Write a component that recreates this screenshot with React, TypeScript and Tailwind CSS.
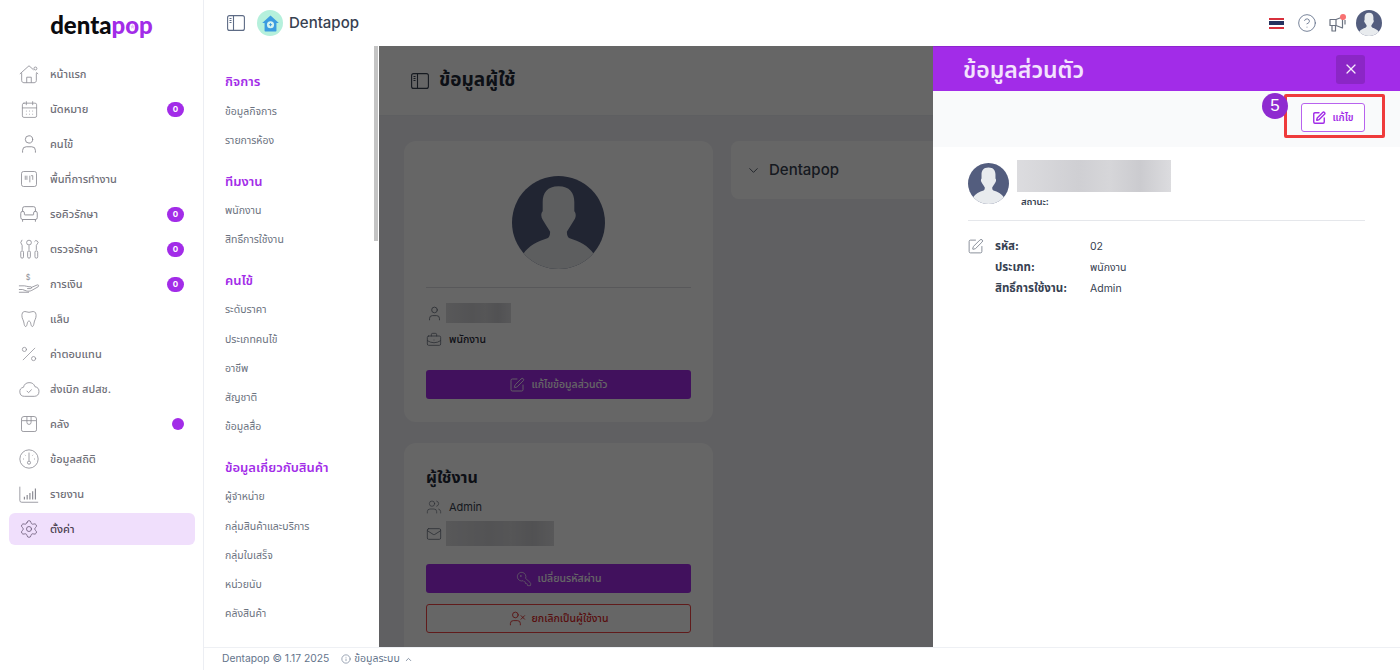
import type { ReactNode } from "react"
import {
  ArmchairIcon,
  BriefcaseBusiness,
  CalendarDays,
  ChevronDown,
  ChevronUp,
  CircleHelp,
  Info,
  KeyRound,
  Mail,
  Percent,
  Settings,
  SquarePen,
  User,
  UserX,
  Users,
  X,
} from "lucide-react"

const thai = "font-['Inter','Noto_Sans','Noto_Sans_Thai',sans-serif]"

function Avatar({ className }: { className: string }) {
  return (
    <svg viewBox="0 0 100 100" className={className}>
      <defs>
        <clipPath id="av-clip">
          <circle cx="50" cy="50" r="50" />
        </clipPath>
      </defs>
      <g clipPath="url(#av-clip)">
        <rect width="100" height="100" fill="#535d7e" />
        <path
          d="M50 11C38 11 33 18 33 28L33 38C31 40 31 44 33 47C35 50 36 52 38 55L41 60C41 64 40 66 38 67C28 70 18 75 12 84L12 100L88 100L88 84C82 75 72 70 62 67C60 66 59 64 59 60L62 55C64 52 65 50 67 47C69 44 69 40 67 38L67 28C67 18 62 11 50 11Z"
          fill="#e8ebee"
        />
      </g>
    </svg>
  )
}

// sidebar toggle with the small ticks in the left pane
function PaneIcon({ color }: { color: string }) {
  return (
    <svg viewBox="0 0 18 16" className="w-[18px] h-[16px]" fill="none" stroke={color} strokeWidth="1.100">
      <rect x="0.600" y="0.600" width="16.800" height="14.800" rx="2" />
      <path d="M6.500 .6v14.800" />
      <path d="M2.500 3.500h2M2.500 5.500h2M2.500 7.500h2" />
    </svg>
  )
}

function Tooth() {
  return (
    <svg viewBox="0 0 24 24" className="w-[20px] h-[20px]" fill="none" stroke="#8b8b93" strokeWidth="1">
      <path d="M7 3C4 3 3.500 6 3.500 8c0 4 2 5 2.500 9 .3 2 .8 4 2 4s1.500-2 2-4c.3-1.500.8-2.500 2-2.500s1.700 1 2 2.500c.5 2 .8 4 2 4s1.700-2 2-4c.5-4 2.500-5 2.500-9 0-2-.5-5-3.500-5-2 0-3 1-5 1S9 3 7 3z" />
    </svg>
  )
}

function HomeIcon() {
  return (
    <svg viewBox="0 0 24 24" className="w-[22px] h-[22px]" fill="none" stroke="#8b8b93" strokeWidth="0.900">
      <path d="M2 12 12 3l5 4.500M22 12l-2-1.800M4 11v8c0 1.500 1 2.500 2.500 2.500h11c1.500 0 2.500-1 2.500-2.500v-8M9.500 21.500v-6h5v6" />
      <circle cx="19" cy="6" r="1.600" />
    </svg>
  )
}

function Board() {
  return (
    <svg viewBox="0 0 24 24" className="w-[20px] h-[20px]" fill="none" stroke="#8b8b93" strokeWidth="1">
      <rect x="3" y="3" width="18" height="18" rx="2.500" />
      <path d="M7.500 8v5M9.500 8v5M13 8v8M16.500 8v5M14.500 8h2" />
    </svg>
  )
}

function Tools() {
  return (
    <svg viewBox="0 0 24 24" className="w-[22px] h-[22px]" fill="none" stroke="#8b8b93" strokeWidth="0.900">
      <path d="M4.500 2 3 5l1.500 3v5M12 8v5M20 8v5M18 4a2 2 0 1 1 3 2.500L20 8" />
      <circle cx="12" cy="5" r="2.600" />
      <rect x="3" y="14" width="3" height="8" rx="1.500" />
      <rect x="10.500" y="14" width="3" height="8" rx="1.500" />
      <rect x="18.500" y="14" width="3" height="8" rx="1.500" />
    </svg>
  )
}

function Hand() {
  return (
    <svg viewBox="0 0 24 24" className="w-[22px] h-[22px]" fill="none" stroke="#8b8b93" strokeWidth="0.900">
      <path d="M1 14h6c2 0 3 1 5 1h2c1 0 1 2 0 2h-4M14 16l7-3c1.500-.5 2 1 1 2l-7 4c-2 1-4 1-6 .5L5 18H1M1 21h11" />
      <text x="11" y="8" fontSize="8" fill="#8b8b93" stroke="none" textAnchor="middle" fontFamily="Inter">$</text>
    </svg>
  )
}

function CloudOk() {
  return (
    <svg viewBox="0 0 24 24" className="w-[22px] h-[22px]" fill="none" stroke="#8b8b93" strokeWidth="0.900">
      <path d="M7 20a5 5 0 0 1-1-9.900A6.500 6.500 0 0 1 18.500 9.500 5.300 5.300 0 0 1 18 20z" />
      <path d="m9.500 14 2 2 3.500-3.500" />
    </svg>
  )
}

function Box() {
  return (
    <svg viewBox="0 0 24 24" className="w-[20px] h-[20px]" fill="none" stroke="#8b8b93" strokeWidth="1">
      <path d="M3 8V6a3 3 0 0 1 3-3h12a3 3 0 0 1 3 3v2M3 8v11a2 2 0 0 0 2 2h14a2 2 0 0 0 2-2V8M3 8h18" />
      <path d="M9.500 3v7a2.500 2.500 0 0 0 5 0V3" />
    </svg>
  )
}

function Dial() {
  return (
    <svg viewBox="0 0 24 24" className="w-[22px] h-[22px]" fill="none" stroke="#8b8b93" strokeWidth="0.900">
      <circle cx="12" cy="12" r="10" />
      <path d="M12 5v9M5.500 12h1M17.500 12h1M7.500 7.500l.7.7M16.500 7.500l-.7.7" />
      <circle cx="12" cy="16" r="1.700" />
    </svg>
  )
}

function Bars() {
  return (
    <svg viewBox="0 0 24 24" className="w-[22px] h-[22px]" fill="none" stroke="#8b8b93" strokeWidth="0.900">
      <path d="M2 4v15a2 2 0 0 0 2 2h18" />
      <path d="M7 18v-3M10 18v-5M13 18v-7M16 18v-9M19 18V6" strokeWidth="1.300" />
    </svg>
  )
}

function Horn() {
  return (
    <svg viewBox="0 0 18 16" className="w-[18px] h-[16px]" fill="none" stroke="#6b7280" strokeWidth="1.200" strokeLinejoin="round">
      <path d="M1 3.500h6L13.500 1v11L7 9.500H1z" />
      <path d="M3 9.500V15h3.500V9.500M7 3.500v6M16 4v4.500" />
    </svg>
  )
}

type MenuItem = { label: string; icon: ReactNode; badge?: string; dot?: boolean; active?: boolean }

const grayLine = "#8b8b93"

const menu: MenuItem[] = [
  { label: "หน้าแรก", icon: <HomeIcon /> },
  { label: "นัดหมาย", icon: <CalendarDays size={19} strokeWidth={1} color={grayLine} />, badge: "0" },
  { label: "คนไข้", icon: <User size={22} strokeWidth={1} color={grayLine} /> },
  { label: "พื้นที่การทำงาน", icon: <Board /> },
  { label: "รอคิวรักษา", icon: <ArmchairIcon size={22} strokeWidth={1} color={grayLine} />, badge: "0" },
  { label: "ตรวจรักษา", icon: <Tools />, badge: "0" },
  { label: "การเงิน", icon: <Hand />, badge: "0" },
  { label: "แล็บ", icon: <Tooth /> },
  { label: "ค่าตอบแทน", icon: <Percent size={20} strokeWidth={0.9} color={grayLine} /> },
  { label: "ส่งเบิก สปสช.", icon: <CloudOk /> },
  { label: "คลัง", icon: <Box />, dot: true },
  { label: "ข้อมูลสถิติ", icon: <Dial /> },
  { label: "รายงาน", icon: <Bars /> },
  { label: "ตั้งค่า", icon: <Settings size={20} strokeWidth={1} color="#6b5b78" />, active: true },
]

const subnav = [
  { title: "กิจการ", items: ["ข้อมูลกิจการ", "รายการห้อง"] },
  { title: "ทีมงาน", items: ["พนักงาน", "สิทธิ์การใช้งาน"] },
  { title: "คนไข้", items: ["ระดับราคา", "ประเภทคนไข้", "อาชีพ", "สัญชาติ", "ข้อมูลสื่อ"] },
  { title: "ข้อมูลเกี่ยวกับสินค้า", items: ["ผู้จำหน่าย", "กลุ่มสินค้าและบริการ", "กลุ่มใบเสร็จ", "หน่วยนับ", "คลังสินค้า"] },
]

function Sidebar() {
  return (
    <aside className="w-[204px] shrink-0 h-full bg-white border-r border-[#eceef3] flex flex-col">
      <div className="h-[58px] flex items-center justify-center pb-[8px] font-['Lato',sans-serif] font-black text-[24px] leading-none">
        <span className="text-[#0b0b0f]">denta</span>
        <span className="text-[#a22ce8]">p</span>
        <span className="relative text-[#a22ce8]">
          o
          <svg viewBox="0 0 10 10" className="absolute left-[4.500px] top-[10.500px] w-[5px] h-[5px]">
            <path d="M5 0l1.500 3.300 3.500.4-2.600 2.400.7 3.500L5 7.900 1.900 9.600l.7-3.500L0 3.700l3.500-.4z" fill="#e3c2f8" />
          </svg>
        </span>
        <span className="text-[#a22ce8]">p</span>
      </div>
      <nav className="flex flex-col pl-[9px] pr-[8px]">
        {menu.map((m) => (
          <div
            key={m.label}
            className={`h-[32px] mb-[3px] flex items-center rounded-md ${m.active ? "bg-[#f0dffc]" : ""}`}
          >
            <div className="w-[22px] ml-[9px] mr-[10px] flex justify-center">{m.icon}</div>
            <span className={`text-[11px] font-medium ${m.active ? "text-[#4b4150]" : "text-[#6f6f78]"}`}>{m.label}</span>
            {m.badge && (
              <span className="ml-auto mr-[11px] w-[17px] h-[15px] rounded-full bg-[#a22ce8] text-white text-[8px] font-bold flex items-center justify-center">
                {m.badge}
              </span>
            )}
            {m.dot && <span className="ml-auto mr-[11px] w-[12px] h-[12px] rounded-full bg-[#a22ce8]" />}
          </div>
        ))}
      </nav>
    </aside>
  )
}

function TopBar() {
  return (
    <header className="h-[46px] shrink-0 bg-white flex items-center pl-[23px] pr-[18px]">
      <PaneIcon color="#5d6b85" />
      <div className="ml-[12px] w-[26px] h-[26px] rounded-full bg-[#b5f0dc] flex items-center justify-center">
        <svg viewBox="0 0 24 24" className="w-[19px] h-[19px]">
          <path d="M12 2 1.500 11.500h3V21a1 1 0 0 0 1 1h13a1 1 0 0 0 1-1v-9.500h3z" fill="#3b9be0" />
          <circle cx="12" cy="13.500" r="4.500" fill="#d6f3ee" />
          <path d="M12 11.500v4M10 13.500h4" stroke="#3b9be0" strokeWidth="1.200" />
        </svg>
      </div>
      <span className="ml-[6px] text-[15px] font-medium text-[#374151] font-['Inter',sans-serif]">Dentapop</span>
      <div className="ml-auto flex items-center">
        <div className="w-[15px] h-[11px] flex flex-col">
          <span className="h-[2px] bg-[#d8303c]" />
          <span className="h-[1.500px] bg-white" />
          <span className="h-[4px] bg-[#25325f]" />
          <span className="h-[1.500px] bg-white" />
          <span className="h-[2px] bg-[#d8303c]" />
        </div>
        <CircleHelp size={20} strokeWidth={1} color="#5d6b85" className="ml-[13px]" />
        <div className="relative ml-[12px] mt-[2px]">
          <Horn />
          <span className="absolute -top-[2px] right-[1px] w-[6px] h-[6px] rounded-full bg-[#f87171]" />
        </div>
        <Avatar className="ml-[9px] w-[26px] h-[26px]" />
      </div>
    </header>
  )
}

function SubNav() {
  return (
    <div className="relative w-[175px] shrink-0 h-full overflow-hidden bg-white pt-[21px] pl-[21px]">
      {subnav.map((s) => (
        <div key={s.title} className="mb-[11px]">
          <div className="h-[30px] flex items-center text-[13px] font-semibold text-[#a22ce8]">{s.title}</div>
          {s.items.map((i) => (
            <div key={i} className="h-[29.200px] flex items-center text-[10.500px] text-[#6b7280]">
              {i}
            </div>
          ))}
        </div>
      ))}
      <div className="absolute top-0 right-[1px] w-[4px] h-[195px] bg-[#c4c4c4]" />
    </div>
  )
}

function Smudge({ className }: { className: string }) {
  return <div className={`bg-[linear-gradient(90deg,#dcdcdf,#cfcfd3_40%,#d6d6d9_60%,#cbcbcf_80%,#dcdcdf)] ${className}`} />
}

function PurpleButton({ icon, label }: { icon: ReactNode; label: string }) {
  return (
    <div className="h-[29px] rounded-[3px] bg-[#a22ce8] text-white flex items-center justify-center gap-[6px] text-[10.500px] font-medium">
      {icon}
      {label}
    </div>
  )
}

function UserPage() {
  return (
    <div className="relative flex-1 min-w-0 h-full overflow-hidden bg-[#f1f1f6]">
      <div className="h-[70px] bg-white border-b border-[#eceef3] flex items-center pl-[32px]">
        <PaneIcon color="#374151" />
        <span className="ml-[10px] text-[19px] font-bold text-[#1f2937]">ข้อมูลผู้ใช้</span>
      </div>
      <div className="flex gap-[18px] pl-[25px] pt-[25px]">
        <div className="w-[309px] shrink-0 flex flex-col gap-[21px]">
          <div className="h-[281px] rounded-xl bg-white px-[22px] pt-[35px]">
            <div className="flex justify-center pb-[18px] border-b border-[#dcdde1]">
              <Avatar className="w-[93px] h-[93px]" />
            </div>
            <div className="mt-[15px] h-[20px] flex items-center">
              <User size={17} strokeWidth={1.200} color="#6b7280" />
              <Smudge className="ml-[3px] w-[65px] h-[20px]" />
            </div>
            <div className="mt-[7px] h-[20px] flex items-center">
              <BriefcaseBusiness size={16} strokeWidth={1.200} color="#6b7280" />
              <span className="ml-[7px] text-[10.500px] font-medium text-[#1f2937]">พนักงาน</span>
            </div>
            <div className="mt-[20px]">
              <PurpleButton icon={<SquarePen size={16} strokeWidth={1.300} />} label="แก้ไขข้อมูลส่วนตัว" />
            </div>
          </div>
          <div className="h-[240px] rounded-xl bg-white px-[22px] pt-[23px]">
            <div className="text-[16px] font-bold text-[#1f2937] leading-[22px]">ผู้ใช้งาน</div>
            <div className="mt-[9px] h-[20px] flex items-center">
              <Users size={16} strokeWidth={1} color="#6b7280" />
              <span className="ml-[7px] text-[11px] text-[#374151]">Admin</span>
            </div>
            <div className="mt-[4px] h-[25px] flex items-center">
              <Mail size={16} strokeWidth={1.200} color="#6b7280" />
              <Smudge className="ml-[4px] w-[108px] h-[25px]" />
            </div>
            <div className="mt-[18px]">
              <PurpleButton icon={<KeyRound size={16} strokeWidth={1} className="-scale-x-100" />} label="เปลี่ยนรหัสผ่าน" />
            </div>
            <div className="mt-[11px] h-[29px] rounded-[3px] border border-[#ef4444] flex items-center justify-center gap-[6px] text-[#dc2626] text-[10.500px] font-medium">
              <UserX size={17} strokeWidth={1.200} />
              ยกเลิกเป็นผู้ใช้งาน
            </div>
          </div>
        </div>
        <div className="w-[300px] shrink-0 h-[58px] rounded-lg bg-white flex items-center pl-[15px]">
          <ChevronDown size={15} strokeWidth={1.500} color="#4b5563" />
          <span className="ml-[8px] text-[15px] font-medium text-[#374151]">Dentapop</span>
        </div>
      </div>
      <div className="absolute inset-0 bg-black/60" />
      <Drawer />
    </div>
  )
}

function Drawer() {
  return (
    <div className="absolute top-0 right-0 bottom-0 w-[467px] bg-white">
      <div className="h-[45px] bg-[#a22ce8] flex items-center pl-[30px] pr-[35px] border-t border-[#8f24cf]">
        <span className="pt-[2px] text-[23px] font-semibold text-[#f3e3fd]">ข้อมูลส่วนตัว</span>
        <div className="ml-auto w-[29px] h-[29px] rounded-[3px] bg-[#8b26c6] flex items-center justify-center">
          <X size={16} strokeWidth={1.800} color="#f5eafc" />
        </div>
      </div>
      <div className="h-[56px] bg-[#f9fafb] flex items-start justify-end pt-[12px] pr-[35px]">
        <div className="w-[64px] h-[29px] rounded-[3px] border border-[#b862ee] bg-white flex items-center justify-center gap-[6px] text-[#a22ce8] text-[10px] font-semibold">
          <SquarePen size={14} strokeWidth={2.400} />
          แก้ไข
        </div>
      </div>
      <div className="mx-[35px] mt-[13px] pb-[12px] border-b border-[#e5e7eb] flex">
        <Avatar className="w-[41px] h-[41px] mt-[3px]" />
        <div className="ml-[8px]">
          <Smudge className="w-[154px] h-[32px]" />
          <div className="mt-[3px] ml-[4px] text-[9.500px] font-semibold text-[#374151] leading-[13px]">สถานะ:</div>
        </div>
      </div>
      <div className="mx-[35px] mt-[15px] flex">
        <SquarePen size={17} strokeWidth={1.100} color="#6b7280" className="-ml-[1px] mt-[2px]" />
        <div className="ml-[11px] grid grid-cols-[95px_1fr] auto-rows-[21px] items-center text-[10.500px]">
          <span className="font-bold text-[11.500px] text-[#374151]">รหัส:</span>
          <span className="text-[#374151]">02</span>
          <span className="font-bold text-[11.500px] text-[#374151]">ประเภท:</span>
          <span className="text-[#374151]">พนักงาน</span>
          <span className="font-bold text-[11.500px] text-[#374151]">สิทธิ์การใช้งาน:</span>
          <span className="text-[#374151]">Admin</span>
        </div>
      </div>
      {/* callout */}
      <div className="absolute top-[48px] right-[15px] w-[101px] h-[44px] rounded-[2px] border-[3px] border-[#ef3b3b]" />
      <div className="absolute top-[47px] right-[112px] w-[26px] h-[26px] rounded-full bg-[#8f2bd0] text-white text-[17px] flex items-center justify-center font-['Liberation_Sans',sans-serif]">
        5
      </div>
    </div>
  )
}

function Footer() {
  return (
    <footer className="h-[23px] shrink-0 bg-white border-t border-[#eef0f4] flex items-center pl-[18px] text-[10.300px] text-[#64748b]">
      <span>Dentapop © 1.17 2025</span>
      <Info size={10} strokeWidth={1.500} className="ml-[12px]" />
      <span className="ml-[3px] text-[10.500px]">ข้อมูลระบบ</span>
      <ChevronUp size={9} strokeWidth={2} className="ml-[4px]" />
    </footer>
  )
}

export default function App() {
  return (
    <div className={`flex h-screen w-full overflow-hidden bg-white ${thai}`}>
      <Sidebar />
      <div className="flex-1 min-w-0 flex flex-col h-full">
        <TopBar />
        <div className="flex-1 min-h-0 flex">
          <SubNav />
          <UserPage />
        </div>
        <Footer />
      </div>
    </div>
  )
}
